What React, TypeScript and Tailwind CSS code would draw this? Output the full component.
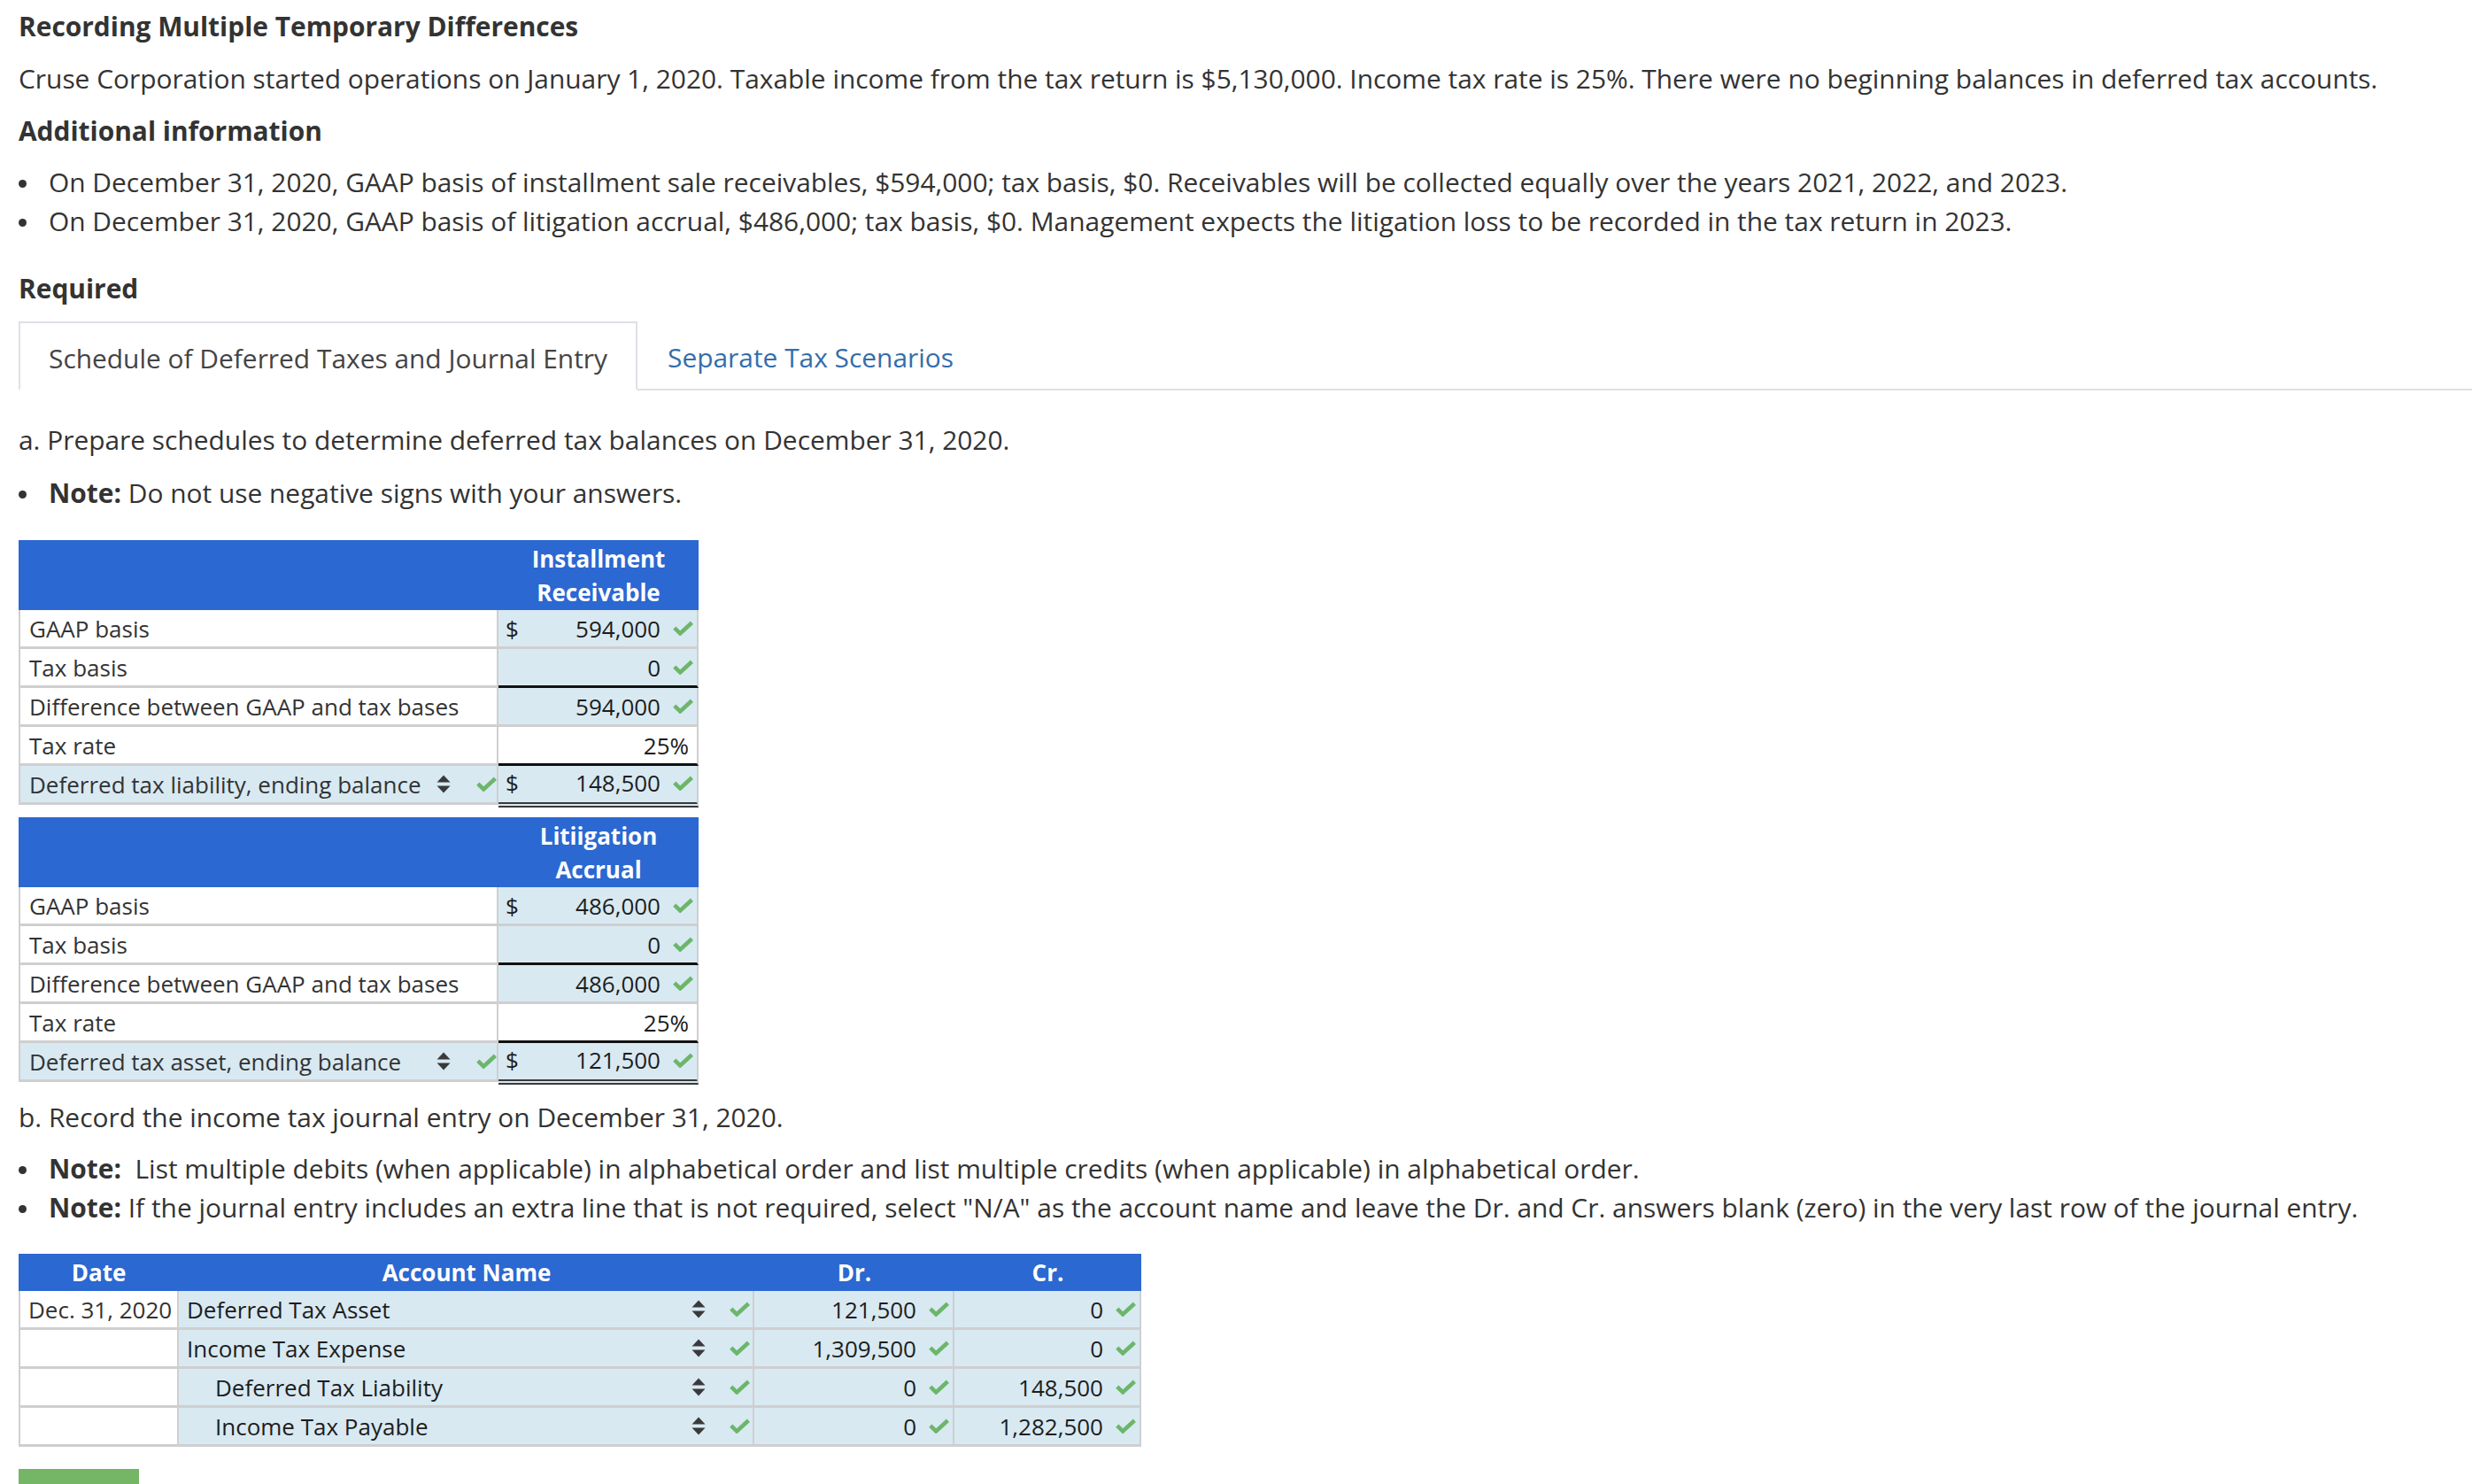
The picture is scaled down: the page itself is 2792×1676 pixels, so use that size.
import React from "react";

type SchedRow = {
  label: string;
  value: string;
  dollar?: boolean;
  check?: boolean;
  select?: boolean;
  whiteRight?: boolean;
  bottom: "gray" | "black" | "double";
};

const installment: SchedRow[] = [
  { label: "GAAP basis", value: "594,000", dollar: true, check: true, bottom: "gray" },
  { label: "Tax basis", value: "0", check: true, bottom: "black" },
  { label: "Difference between GAAP and tax bases", value: "594,000", check: true, bottom: "gray" },
  { label: "Tax rate", value: "25%", whiteRight: true, bottom: "black" },
  { label: "Deferred tax liability, ending balance", value: "148,500", dollar: true, check: true, select: true, bottom: "double" },
];

const litigation: SchedRow[] = [
  { label: "GAAP basis", value: "486,000", dollar: true, check: true, bottom: "gray" },
  { label: "Tax basis", value: "0", check: true, bottom: "black" },
  { label: "Difference between GAAP and tax bases", value: "486,000", check: true, bottom: "gray" },
  { label: "Tax rate", value: "25%", whiteRight: true, bottom: "black" },
  { label: "Deferred tax asset, ending balance", value: "121,500", dollar: true, check: true, select: true, bottom: "double" },
];

const journal = [
  { date: "Dec. 31, 2020", account: "Deferred Tax Asset", indent: false, dr: "121,500", cr: "0" },
  { date: "", account: "Income Tax Expense", indent: false, dr: "1,309,500", cr: "0" },
  { date: "", account: "Deferred Tax Liability", indent: true, dr: "0", cr: "148,500" },
  { date: "", account: "Income Tax Payable", indent: true, dr: "0", cr: "1,282,500" },
];

function Check() {
  return (
    <svg width="23" height="17" viewBox="0 0 23 17" className="shrink-0">
      <path d="M1.8 8.2L8.2 14.4L21.4 2.2" fill="none" stroke="#6cb66a" strokeWidth="4.6" />
    </svg>
  );
}

function SortArrows() {
  return (
    <svg width="16" height="21" viewBox="0 0 16 21" className="shrink-0">
      <polygon points="0.5,8.5 8,0.5 15.5,8.5" fill="#3a3a3a" />
      <polygon points="0.5,12.5 15.5,12.5 8,20.5" fill="#3a3a3a" />
    </svg>
  );
}

function Bullet({ children }: { children: React.ReactNode }) {
  return (
    <li className="flex items-center whitespace-nowrap">
      <span className="w-[9px] h-[9px] rounded-full bg-[#333] shrink-0 mt-[2px]" />
      <span className="ml-[25px]">{children}</span>
    </li>
  );
}

function Schedule({ title, rows }: { title: string[]; rows: SchedRow[] }) {
  return (
    <div className="w-[768px] text-[26px]">
      <div className="flex h-[79px] bg-[#2b68d1]">
        <div className="w-[542px]" />
        <div className="w-[226px] flex flex-col items-center justify-center leading-[38px] font-bold text-white">
          {title.map((t) => (
            <span key={t}>{t}</span>
          ))}
        </div>
      </div>
      {rows.map((r) => (
        <div key={r.label} className="flex items-start">
          <div
            className={
              "w-[542px] h-[44px] flex items-center pl-[10px] border-l-2 border-r-2 border-b-[3px] border-[#cfcfcf] text-[#333] " +
              (r.select ? "bg-[#d8e9f2]" : "bg-white")
            }
          >
            <span>{r.label}</span>
            {r.select && (
              <>
                <span className="ml-auto">
                  <SortArrows />
                </span>
                <span className="ml-[29px]">
                  <Check />
                </span>
              </>
            )}
          </div>
          <div
            className={
              "w-[226px] flex items-center border-r-2 border-r-[#cfcfcf] text-[#1d1d1d] " +
              (r.whiteRight ? "bg-white " : "bg-[#d8e9f2] ") +
              (r.bottom === "double"
                ? "h-[47px] border-b-[6px] border-double border-b-[#3a3a3a] pb-[3px]"
                : r.bottom === "black"
                ? "h-[44px] border-b-[3px] border-b-[#111]"
                : "h-[44px] border-b-[3px] border-b-[#cfcfcf]")
            }
          >
            {r.dollar && <span className="pl-[8px]">$</span>}
            <span className={"ml-auto " + (r.check ? "" : "pr-[9px]")}>{r.value}</span>
            {r.check && (
              <span className="ml-[14px] pr-[4px]">
                <Check />
              </span>
            )}
          </div>
        </div>
      ))}
    </div>
  );
}

export default function App() {
  return (
    <div className="min-h-screen bg-white pl-[21px] text-[29.9px] leading-[44px] text-[#333] font-['Open_Sans',sans-serif]">
      <h1 className="pt-[8px] font-bold whitespace-nowrap">Recording Multiple Temporary Differences</h1>
      <p className="mt-[15px] whitespace-nowrap">
        Cruse Corporation started operations on January 1, 2020. Taxable income from the tax return is $5,130,000. Income tax rate is 25%. There were no beginning balances in deferred tax accounts.
      </p>
      <h2 className="mt-[15px] font-bold">Additional information</h2>
      <ul className="mt-[14px]">
        <Bullet>
          On December 31, 2020, GAAP basis of installment sale receivables, $594,000; tax basis, $0. Receivables will be collected equally over the years 2021, 2022, and 2023.
        </Bullet>
        <Bullet>
          On December 31, 2020, GAAP basis of litigation accrual, $486,000; tax basis, $0. Management expects the litigation loss to be recorded in the tax return in 2023.
        </Bullet>
      </ul>
      <h2 className="mt-[32px] font-bold">Required</h2>

      <div className="mt-[15px] flex items-end h-[78px] border-b-2 border-[#dde1e6]">
        <div className="h-[78px] -mb-[2px] flex items-center px-[32px] pt-[6px] border-t-2 border-l-2 border-r-2 border-b-2 border-[#dde1e6] border-b-white bg-white text-[#444] whitespace-nowrap">
          Schedule of Deferred Taxes and Journal Entry
        </div>
        <div className="h-[76px] flex items-center pl-[34px] pt-[6px] text-[#336eab] whitespace-nowrap">Separate Tax Scenarios</div>
      </div>

      <p className="mt-[34px]">a. Prepare schedules to determine deferred tax balances on December 31, 2020.</p>
      <ul className="mt-[16px]">
        <Bullet>
          <b>Note:</b> Do not use negative signs with your answers.
        </Bullet>
      </ul>

      <div className="mt-[31px]">
        <Schedule title={["Installment", "Receivable"]} rows={installment} />
      </div>
      <div className="mt-[11px]">
        <Schedule title={["Litiigation", "Accrual"]} rows={litigation} />
      </div>

      <p className="mt-[15px]">b. Record the income tax journal entry on December 31, 2020.</p>
      <ul className="mt-[14px]">
        <Bullet>
          <b>Note:</b>&nbsp; List multiple debits (when applicable) in alphabetical order and list multiple credits (when applicable) in alphabetical order.
        </Bullet>
        <Bullet>
          <b>Note:</b> If the journal entry includes an extra line that is not required, select "N/A" as the account name and leave the Dr. and Cr. answers blank (zero) in the very last row of the journal entry.
        </Bullet>
      </ul>

      <div className="mt-[30px] w-[1268px] text-[26px]">
        <div className="flex h-[42px] bg-[#2b68d1] font-bold text-white">
          <div className="w-[181px] flex items-center justify-center">Date</div>
          <div className="w-[650px] flex items-center justify-center">Account Name</div>
          <div className="w-[226px] flex items-center justify-center">Dr.</div>
          <div className="w-[211px] flex items-center justify-center">Cr.</div>
        </div>
        {journal.map((j) => (
          <div key={j.account} className="flex h-[44px]">
            <div className="w-[181px] flex items-center pl-[9px] bg-white border-l-2 border-r-2 border-b-[3px] border-[#cfcfcf] text-[#333] whitespace-nowrap">
              {j.date}
            </div>
            <div className="w-[650px] flex items-center bg-[#d8e9f2] border-r-2 border-b-[3px] border-[#cfcfcf] text-[#1d1d1d] pr-[3px]">
              <span className={j.indent ? "pl-[41px]" : "pl-[9px]"}>{j.account}</span>
              <span className="ml-auto">
                <SortArrows />
              </span>
              <span className="ml-[27px]">
                <Check />
              </span>
            </div>
            <div className="w-[226px] flex items-center justify-end bg-[#d8e9f2] border-r-2 border-b-[3px] border-[#cfcfcf] text-[#1d1d1d] pr-[4px]">
              <span>{j.dr}</span>
              <span className="ml-[14px]">
                <Check />
              </span>
            </div>
            <div className="w-[211px] flex items-center justify-end bg-[#d8e9f2] border-r-2 border-b-[3px] border-[#cfcfcf] text-[#1d1d1d] pr-[4px]">
              <span>{j.cr}</span>
              <span className="ml-[14px]">
                <Check />
              </span>
            </div>
          </div>
        ))}
      </div>

      <div className="mt-[25px] w-[136px] h-[20px] bg-[#74b566]" />
    </div>
  );
}
